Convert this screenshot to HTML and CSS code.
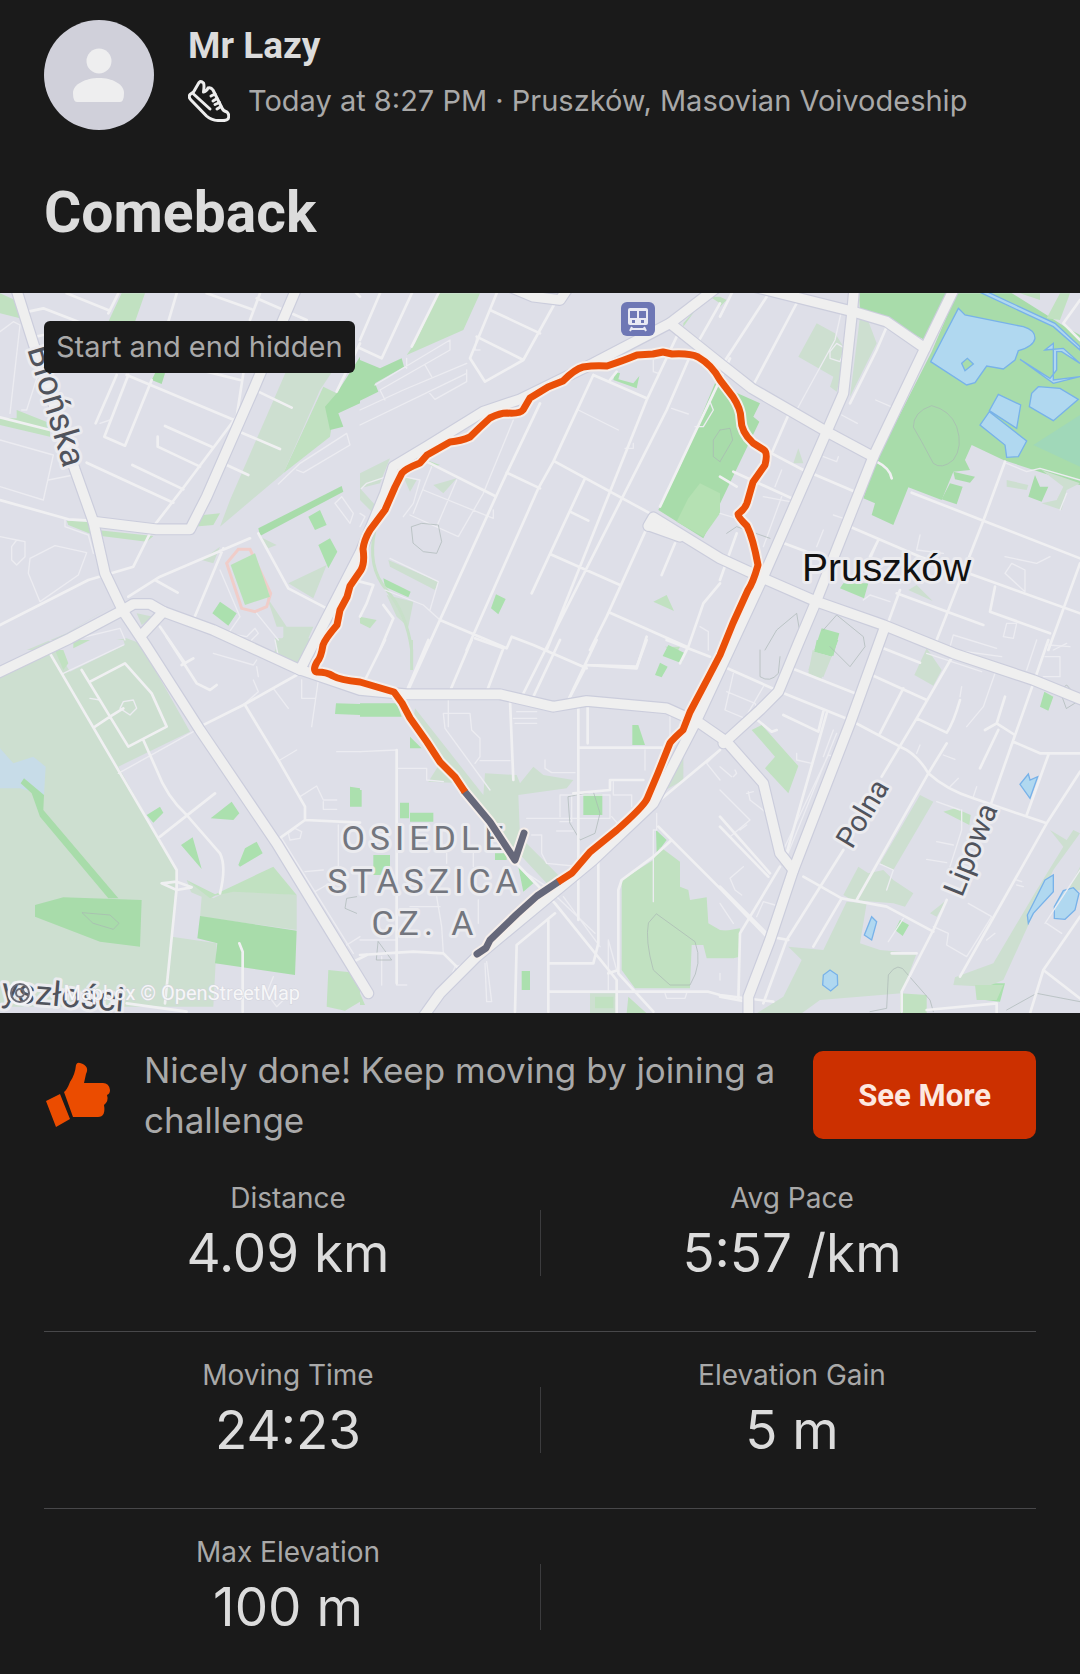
FILE: index.html
```html
<!DOCTYPE html>
<html lang="en">
<head>
    <meta charset="UTF-8">
    <meta name="viewport" content="width=device-width, initial-scale=1.0">
    <title>Comeback</title>
    <link rel="stylesheet" href="styles.css">
</head>
<body>
<header class="athlete">
    <svg class="avatar" viewBox="0 0 110 110" role="img" aria-label="Mr Lazy">
        <circle cx="55" cy="55" r="55" fill="#d0d0da"/>
        <circle cx="55" cy="41" r="12.5" fill="#eeeeef"/>
        <path d="M33 82q-4 0-4-9c0-9 13-15 26-15s25 6 25 15q0 9-4 9z" fill="#eeeeef"/>
    </svg>
    <div class="athlete-info">
        <div class="name">Mr Lazy</div>
        <div class="meta">
            <svg class="shoe" viewBox="0 0 42 42" aria-hidden="true">
                <path d="M2 14.500L5.500 12L11 2.500Q13 .5 15.500 3Q16.500 5 15.500 12Q19 11 20 8Q23 7 25 10L34 28Q35 31 39 32Q42 35 40 39Q38 41 33 40.500Q24 41 18.500 36L3 20Q0 17 2 14.500Z"/>
                <path d="M5.500 14L22 29M23 16L27 14M25 21L29 18.500M27 24.500L31.500 22.500M29 29L33 26.500"/>
            </svg>
            <span>Today at 8:27 PM · Pruszków, Masovian Voivodeship</span>
        </div>
    </div>
</header>

<h1>Comeback</h1>

<div class="map">
    <!-- The drawing is split in 3 x 2 tiles of 1080 units -->
    <svg class="map-canvas" viewBox="0 0 3240 2160" role="img" aria-label="Route map, Pruszków">
        <defs>
            <g id="major">
                <g transform="translate(0 -39)">
                    <path d="M40 0L100 190L225 570L280 725L315 880L370 995L440 1100L600 1350L830 1690L1105 2140"/>
                    <path d="M280 725L470 748H570L620 650L760 330L900 0"/>
                    <path d="M-20 1185L210 1075L370 990L400 972H450L490 995L640 1050L890 1165L1080 1230L1220 1243H1500L1660 1280L1760 1263L2000 1285L2100 1330L2180 1385L2290 1510L2340 1720L2380 1770"/>
                    <path d="M425 1065L490 995"/>
                    <path d="M900 1170L1080 820L1155 640L1180 560L1280 500L1450 395L1560 358L1780 250L2010 130L2180 0"/>
                </g>
                <g transform="translate(1080 -39)">
                    <path d="M930 130L1080 250L1175 325L1400 455L1540 530"/>
                    <path d="M865 738L880 712L1080 835L1210 895L1370 965L1570 1035L1780 1120L2020 1200L2180 1265"/>
                    <path d="M870 738L960 770"/>
                    <path d="M400 0L520 50L600 60L640 0"/>
                </g>
                <g transform="translate(2160 -39)">
                    <path d="M405 0L395 110L370 340L320 455L130 890L-70 1320L-200 1570L-380 1740L-730 2030L-840 2140L-890 2210"/>
                    <path d="M715 0L615 205L460 530L290 960L235 1090L175 1235L120 1290L10 1390"/>
                    <path d="M60 10L400 95L500 125L615 205"/>
                    <path d="M495 1040L390 1330L220 1770L150 1980L85 2150V2210"/>
                </g>
            </g>
            <path id="track" d="M465 499L455 484L440 469L427 449L410 425L402 410L394 399L377 394L360 389Q340 387 333 383Q327 379 317 379Q312 378 317 369Q321 365 323 352Q325 346 337 332L340 317L347 304L350 293L361 277Q365 270 363 256Q364 247 370 237L385 217L395 194L402 180Q405 176 420 170L427 162L450 149Q461 148 470 144Q480 134 490 125Q500 120 507 120Q520 121 523 117L530 105L548 94L563 88Q575 76 583 74Q595 72 607 73Q625 67 637 62L653 61L663 59L672 61Q690 60 698 64Q712 72 720 87L733 104Q741 116 741 126Q741 139 753 150L764 157Q768 160 765 172L753 189L747 210Q745 216 738 221Q738 224 747 233Q753 245 758 272Q753 290 748 297L733 330L720 362L708 385L690 419L683 437Q673 446 670 450L658 480L647 506Q643 514 617 537L590 559L572 580L558 589"/>
            <path id="hidden-track" d="M465 499L490 529L515 567L524 540M558 589L537 603L517 621L490 647L486 655L477 661"/>
        </defs>

        <rect width="3240" height="2160" fill="#dedfe8"/>

        <g class="areas" transform="translate(0 -39)">
            <path class="g2" d="M0 40L45 60L60 115L0 100zM365 40H435L405 125H325zM50 390L150 430V470L0 435V415H50z"/>
            <path class="g1" d="M860 270H1000L960 330L850 580L660 740L690 660z"/>
            <path class="g2" d="M970 320L1010 340L990 470L850 580z"/>
            <path class="g3" d="M1080 230L1010 340L975 380L990 450L1030 440L1015 400L1080 370zM470 270L495 280L485 312L455 300z"/>
            <path class="g3" d="M775 745L1025 618L1030 635L780 768z"/>
            <path class="g2" d="M200 722L270 725L290 750L460 768L440 785L280 765L205 735zM610 705L660 700L640 735L580 740z"/>
            <path class="g4" d="M925 710L960 690L980 735L945 750zM955 795L990 775L1012 815L985 865zM637 1000L660 965L710 1000L685 1037z"/>
            <path class="g1" d="M865 910L980 855L940 955zM605 840L660 800L640 850zM780 770L830 795L805 805zM850 1040H940L890 1155L820 1120L850 1070zM800 950L860 1040H830z"/>
            <path class="g1" d="M120 1110L340 975L200 1060L80 1110zM410 1000L460 1010L425 1035z"/>
            <path d="M715 808H750L812 940L800 980L765 995L725 985L680 850z" fill="none" stroke="#f0cdc9" stroke-width="9"/>
            <path d="M692 855L765 820L810 950L735 975z" fill="#b8e2b8"/>
        </g>
        <g class="areas" transform="translate(1080 -39)">
            <path class="g2" d="M235 40H360L310 150L140 225L165 190z"/>
            <path class="g3" d="M0 240L60 265L125 235L132 260L45 310L55 335L0 362z"/>
            <path class="g1" d="M0 580L90 535L60 610L0 625zM0 625L50 680L40 700L0 660z"/>
            <path class="g4" d="M765 275L780 280L775 298L820 310L838 288L830 325L760 300zM393 985L408 943L437 957L415 1003zM70 895L152 935L145 952L75 920z"/>
            <path class="g1" d="M85 840L235 905L225 930L90 860zM80 945L160 965L145 1040L110 1010zM220 615L290 595L250 640zM130 590L170 600L150 635z"/>
            <path class="g2" d="M0 1010L50 1020L30 1045L0 1030zM880 965L920 945L942 993zM970 130L1010 85L970 140zM1050 50H1080V70zM915 1100H960L950 1120zM200 540L240 555L215 560z"/>
            <path class="g3" d="M1065 310L1200 370L1180 410L1198 425L1030 775L895 690L960 560z"/>
            <path class="g5" d="M985 655L1020 610L1080 640V700L1030 770L950 725z"/>
            <path d="M45 750Q20 860 80 930T155 1110V1170" fill="none" stroke="#c8e0c9" stroke-width="9"/>
        </g>
        <g class="areas" transform="translate(2160 -39)">
            <path class="g2" d="M415 40H680L615 180L500 120L420 90z"/>
            <path class="g3" d="M710 40H1080V615L850 540L755 495L735 540L750 570L700 575L665 660L565 622L520 735L455 705L465 670L430 655L460 560L635 215zM420 40H680L615 180L500 120L420 90z"/>
            <path class="t" d="M940 495L1080 405V560z"/>
            <path class="base" d="M860 30H1080V165L1035 140L980 105z"/>
            <path class="g2" d="M1020 40H1050L1020 120L980 115zM900 40H960V60zM0 50L20 60L0 80z"/>
            <path class="g3" d="M700 575L765 590L750 608L705 598zM690 610L728 620L710 673L665 658zM945 585L960 620L985 620L965 665L925 650z"/>
            <path class="g1" d="M290 130L345 160L380 215L350 335L330 320L340 290L235 230zM420 110H440L470 190L390 350zM860 600L925 615L920 630L860 620zM965 570L1080 610L1040 630L1025 690L965 670L1010 660L1030 620z"/>
            <path class="g4" d="M370 910H445L432 955L360 925zM305 1045L358 1060L340 1128L283 1110z"/>
            <path class="g1" d="M565 930L590 915L638 963zM220 550L235 505L250 550zM278 1110L310 1120L305 1200L265 1180z"/>
            <path class="w" d="M715 85L735 105L910 140Q945 150 945 175Q940 200 895 212L885 240L850 267L800 258L765 308L740 315L632 245zM725 250L742 235L760 252L735 272z"/>
            <path class="w" d="M835 343L902 375L890 445L808 392zM808 395L920 483L895 530L860 532L855 495L780 435zM955 320L1020 325L1075 358L1000 422L928 380L935 340z"/>
            <path class="w" d="M765 30L1000 140L1080 210L1080 200L1005 130L790 30zM975 210L1030 205L1080 250L1025 215H1010V270L990 295L900 238L1000 310L1080 290L1000 300L1000 190z"/>
        </g>
        <g class="areas" transform="translate(0 1041)">
            <path class="g1" d="M0 100L150 40L230 20L380 -5L420 10L570 275L355 380L530 690L525 750L515 890L650 910L640 1100H0z"/>
            <path class="g1" d="M560 720L640 775L690 750L890 765L890 870L600 830zM825 -5H940L900 80L830 60z"/>
            <path class="base" d="M545 745L605 770L595 895L520 890zM145 0H370L375 15L210 95L165 20z"/>
            <path class="g2" d="M630 770L820 680L890 765L700 755zM560 720L650 765L630 775zM985 990L1080 1000V1085L1035 1112L980 1100zM165 30H190L205 70L190 90zM220 0H270L220 25z"/>
            <path class="lake" d="M0 325L40 370L100 350L137 380L132 465L60 445H0z"/>
            <path class="g3" d="M105 795L190 772L425 780L420 920L300 905L105 830z"/>
            <path class="g3" d="M62 430L72 415L132 465L130 510L355 775H325L120 530L95 460z"/>
            <path class="g3" d="M600 828L890 872L885 1005L645 970L652 910L592 895z"/>
            <path class="g4" d="M440 525L480 500L490 518L460 548zM632 535L695 485L718 520L700 540zM543 615L578 592L605 687zM715 675L735 625L770 605L788 640L720 680zM1008 190L1080 192V225L1005 222zM1050 440L1080 445V500H1050z"/>
        </g>
        <g class="areas" transform="translate(1080 1041)">
            <path class="g4" d="M0 190H110L125 230H0zM150 290L185 325H150zM0 450H5V500H0zM120 488H147V535H120zM150 518H220V545H150zM40 645H90V705H40zM405 640H440V660H405zM475 680L520 730L490 755zM485 993H510V1050H485zM817 255H835L855 315H817zM670 462H727V525H670zM925 15L975 40L965 70L908 48zM900 68L923 80L905 112L885 105zM888 570L920 600L890 640z"/>
            <path class="g1" d="M165 205L370 465L375 400L470 405L480 430L520 380L550 405L640 420L620 445L475 465L480 590L600 710L560 730L430 590L310 430L205 425L240 370L160 240zM900 460L970 350V420zM690 1060H770V1120H690z"/>
            <path class="g2" d="M900 620L960 665V740L985 750L990 780L1040 772L1045 850L1080 870L1140 875V950L1120 955H1040L1030 915H995L990 1045L825 1045L785 990V720L880 660zM805 1070L860 1120H800zM0 1060L15 1095H0zM705 1070H760V1105H705z"/>
            <path d="M155 0V70" fill="none" stroke="#c8e0c9" stroke-width="8"/>
        </g>
        <g class="areas" transform="translate(2160 1041)">
            <path class="g4" d="M290 0H355L335 50L283 35zM973 155L1000 170L985 212L960 200zM540 840L567 855L548 888L525 870zM800 1030H855L840 1085L795 1080z"/>
            <path class="g1" d="M283 35L335 50L310 112L265 90zM620 25L665 90L640 137L583 105zM600 465L640 485L520 690L480 670zM415 680L445 700L490 690L520 720L580 760L555 800L520 790L395 780L370 765zM380 785L440 790L420 910L480 930L590 940L545 1060L300 1080L245 1120H110L190 1070L245 960L205 920L310 930zM990 570L1040 600L1060 570L1080 580L1000 690L850 1020L800 1040L700 1035L705 1012L820 970L950 750L1030 620zM1080 680L1040 760L1080 750zM630 820L680 780L650 830z"/>
            <path class="g2" d="M95 270L125 255L235 378L205 460L135 385L165 350zM670 515L705 505L752 525L748 555zM540 1060L620 1065V1120H540zM765 1035H850L830 1080H770zM0 875L60 865L50 950H0z"/>
            <path class="w" d="M455 830L470 845L455 900L433 885zM330 990L352 1005L353 1035L332 1053L308 1035L310 1005zM925 402L930 420L953 410L930 475L900 433zM975 720L1000 705V755L940 820L925 850L922 825L945 780zM1060 743L1077 760L1065 810L1035 838L1003 835V800L1030 752z"/>
        </g>

        <g class="paths">
            <path transform="translate(0 -39)" d="M0 155L40 125L60 135L30 400M0 480L160 525L130 660L0 620M0 770L50 780L35 800V840L50 855L75 830V785L50 780M90 835L165 797L260 818L235 885L120 965L85 880zM145 600L220 585M195 720V740L265 765L280 820M835 612L900 550L1040 460L1050 495L910 578L890 570M1005 670L1025 650L1060 700L1050 730zM660 870L720 1010L685 1060L740 1070L765 1045L775 1060L755 1080M770 1000L835 1080M65 390H80L115 280M215 1080L360 1045L375 1080M300 430L330 420"/>
            <path transform="translate(1080 -39)" d="M0 390L130 330L320 250M0 435L320 280M45 315L270 180V210L60 330L75 360M140 235V265M195 255L215 290M205 335L225 358L320 305V270M460 420L370 640L295 770L150 705M215 560L160 700M190 630L400 715V690M290 600L230 740M130 590L180 600L160 670L130 710M90 835L235 905L210 990M75 930L190 975L240 1020M655 390L775 450M820 490V505H795M935 385L985 402M1050 365L1060 390L1030 440H1005M350 170L345 210H360M5 625L20 610L80 590M0 700L15 710L0 740M880 240V275L895 280M1020 1040L1045 1055V1110"/>
            <path transform="translate(2160 -39)" d="M365 90L345 180L230 390M330 215L350 190L375 205L360 245L330 235zM467 360L518 382M365 405L412 430M310 530L350 545L355 530M0 700L50 715M130 650L210 665M185 570L165 620M185 650L130 800M340 705L370 715M310 750L290 800M475 780L455 830M600 765L590 810L670 820M855 830L950 850L990 830M875 850L855 880L915 935V870L875 850M850 1070L860 1030H890L880 1075L850 1070M690 1100L700 1065L830 1105M860 550L920 575L960 565L1080 600M1040 640L1020 690M430 960L450 945L510 965M640 1100L600 1080M1000 1110L1040 1090"/>
            <path transform="translate(0 1041)" d="M190 100L370 15M355 400L580 275M640 40L760 75L770 60M825 0L835 50M905 120V175H945M955 120L935 260M1010 335H1080M760 120L775 155L730 195M820 145L865 205M900 470L950 438L970 480H1010M970 485V508H1010M770 80L775 110M840 360L890 330M865 580L870 600L900 595L905 575L885 565zM845 595L1060 940M915 695L970 690M945 755L980 735M1015 555V680M820 1010L800 1060L830 1100L850 1080M1040 915L1080 890M270 175L300 180M370 185L400 180L410 205L390 225L360 205z"/>
            <path transform="translate(1080 1041)" d="M265 180V260M250 220H330L335 270L360 295V350L345 370M250 220L255 265L390 450M360 362H450M470 215H530M460 235H530M465 250H530M555 360V385L575 398H645M0 335L110 330M110 385H200V420L250 425M500 535H750V465L600 465V530M600 545H635V465M760 425V465H815V500M590 573H640M755 530L790 570M930 220V310M855 330V390M890 520V570H880V785M515 585H545V640L560 670L640 678M705 880L590 770M610 770L720 920M500 700L560 740M380 965L395 1085H380L375 970M0 900H110V1035H140M250 940L245 860L230 770M275 1005L285 980L360 960M65 950V1035M355 780V850M340 640V680M260 640V670M150 800H240M915 1060L920 1075H975L980 1060M1040 370L1080 330M1040 370L1080 420M745 900V1050M745 900L770 990"/>
            <path transform="translate(2160 1041)" d="M40 100L15 210L75 235L130 140M20 155L105 190L120 230M350 280L200 650M340 270L310 350M345 350L325 345L190 630M230 340V360L275 370M35 410L0 380M40 410L50 400L45 390M85 455L90 480L135 515M80 460L100 455M30 590L90 540L0 450M60 570L80 555M70 680L30 715L45 750L65 765M110 830L130 785L165 795M825 100L790 200L740 260M620 40L785 95M700 30L845 50M950 0L920 90M985 15L1050 20M975 50H1020V110H970M725 140L720 170M600 315L590 340M670 345L705 358M715 415L690 440M650 605L700 615M620 658L680 668M650 485L720 510M770 440L760 470M480 672L520 690L500 750M640 860L685 880L680 915L740 950L815 830L745 790M550 835L505 905M890 735L910 740M800 900L825 880M890 720L905 725M980 850L1025 880M1080 690L975 850M725 510V570L690 680M0 790L40 850M0 1020V1000"/>
        </g>
        <g class="hollows">
            <path transform="translate(1080 -39)" d="M155 740L185 730L235 735L245 785L230 820L190 815L160 790zM1080 450L1060 480V530L1080 545"/>
            <path transform="translate(2160 -39)" d="M580 440Q580 395 635 377Q690 390 710 440Q730 500 700 540Q665 570 640 550L605 485zM0 450L30 445L38 480L0 545M20 760L50 740L150 775M135 1110L170 1050L230 1000L240 1060M310 1050L350 1005L430 1070L435 1100L390 1160L330 1100"/>
            <path transform="translate(0 1041)" d="M247 818L330 825L357 850L340 868L280 850zM1070 770L1040 775L1035 805L1070 820"/>
            <path transform="translate(1080 1041)" d="M890 822L1005 905Q1030 970 990 1035H930L880 990Q855 900 865 850zM625 470L700 455L720 520L705 580L660 600L630 550zM55 905L95 960H50z"/>
            <path transform="translate(2160 1041)" d="M450 1115L500 1105L505 1005Q535 960 560 1000L630 1080L640 1115M860 1110L950 1060L1080 1085M1020 150L1040 135L1080 180L1040 205zM120 30V110Q150 130 175 100L180 50"/>
        </g>

        <g class="minor">
            <path transform="translate(0 -39)" d="M85 95L130 85L260 135M200 40L330 92M325 100L355 40M530 40L505 125M620 40L755 88M780 40L750 120M770 55L920 120M1030 0L1080 50M1080 190L1010 335M350 285L287 430M385 285L313 470L375 497L455 300M380 285L715 425M620 275L720 300M730 280L710 410L635 510L545 630L460 740L400 860L265 900L0 1035M495 438L635 500M473 470V500L600 560M397 555L550 628M260 548L520 668M775 335L875 383M725 458L840 507M680 555L745 585M0 412L150 450M0 660L205 718L270 722M385 950L480 890L750 775M670 805L580 1020M465 900L533 938M775 760L865 925L980 985M85 175L130 165M480 1040L555 1150"/>
            <path transform="translate(1080 -39)" d="M60 40L0 180M160 30L65 235L0 205M240 30L155 200M410 40L330 235L375 305L490 240L590 60M390 90L540 160M350 170L490 240M950 170L860 360L560 1110M985 240L920 390L480 1260M1110 235L900 680M700 285L580 545L535 625L320 1110M540 370L440 580L410 645L190 1130L140 1240M700 285L860 355M750 300L770 275M200 545L405 648M440 578L540 625M585 545L870 700M675 595L515 940M630 695L685 722M570 822L780 915M860 745L740 1010L690 1110M945 790L905 885M750 998L980 1100M240 1020L440 1105L455 1070L520 1095L680 1165M0 905L40 915L20 970L0 1010M70 975L100 1015L60 1110M1080 70L1015 185M1080 910L1030 970L985 1100L960 1150M860 1070L830 1165L680 1155L620 1270"/>
            <path transform="translate(2160 -39)" d="M40 30L0 110M140 50L10 250M235 60L100 315M500 140L470 210L390 370M205 405L155 520L250 570M40 575L215 655M280 582L405 635M470 545Q510 565 515 595M575 638L790 722L1080 835M855 545L790 722L650 1080M385 738L600 830M475 780L450 830M600 830L760 885M540 930L500 1040M530 940L790 1035M760 885L1080 1000M825 920L810 995L990 1060M1080 850L985 1110M1080 60L1030 130L1080 180M180 785L260 815M0 900L50 760M0 590L50 620"/>
            <path transform="translate(0 1041)" d="M150 40L530 690V745L495 1090M245 90L330 230L385 320L500 260L455 160L375 70L270 125M330 230L285 260M330 230L370 205M430 300L470 390Q500 470 560 525L660 640Q680 680 660 760M480 590L645 460M500 -10L590 130L630 150L650 135M545 75L580 55M600 260L730 195L890 105M735 195L835 360L915 500V540L825 605M915 540L1080 548M718 910L728 935V1115M1050 970L1100 945M380 1090L560 1115M485 730L530 725L575 742L530 750z"/>
            <path transform="translate(1080 1041)" d="M75 0L15 120M205 0L135 165M335 0L265 165M430 25L380 155M600 0L520 170M710 0L620 190M655 185V840M683 190V310M655 323H905M450 180L460 420M345 -5L430 25M110 330V1030M715 660V910L700 970H570M565 840V1115M585 790L770 1020V1120M585 820L470 915L465 1115M585 790L440 640M565 1055H1045L1080 1065L1240 1085M900 480L1080 330M895 560L1080 745L1220 890M935 600L880 650L785 720L775 750V1000L880 1115M640 460L750 450V420H850M0 945L160 935L250 940L300 990M745 1000L775 990M860 0L830 80L680 75M920 0L1050 50"/>
            <path transform="translate(2160 1041)" d="M0 75L180 155L390 240L540 320Q590 340 625 400Q680 450 760 475L980 550M215 85L405 160M455 105L620 180M490 25L600 68M550 145L480 280M700 45L590 235L485 410M590 235L680 278Q700 250 720 180M370 630L200 900L130 1090M680 310L625 400L410 780M320 220L200 640M310 215L295 275L190 225M985 0L940 130L880 300L810 500M855 170L830 250L880 282M830 250L795 270M835 270L780 385M880 305L960 340H1080M985 345L920 525M1080 395L980 550L720 1010M680 780L640 870L545 1055V1115M250 710L365 775L500 800L640 875M365 775L280 920M515 940H590M1080 830L970 990L930 1120M970 990L1080 1075M0 740L150 890L205 900M180 680L60 880L55 1080M0 1070L80 1085M620 1110L830 1090V1120M100 230L155 275L170 270M0 560L145 710M150 700L0 530"/>
        </g>

        <use href="#major" class="major-casing"/>
        <use href="#major" class="major-road"/>

        <g transform="scale(3)">
            <g class="station" transform="translate(621 9)">
                <rect width="34" height="34" rx="6" fill="#6e77b5"/>
                <rect x="7" y="6" width="20" height="17" rx="2" fill="#e9eaf4"/>
                <path d="M9 9h7v7H9zM18 9h7v7h-7zM11 18h3v3h-3zM20 18h3v3h-3z" fill="#6e77b5"/>
                <path d="M11 25L9 29M23 25L25 29M10 27H24" fill="none" stroke="#e9eaf4" stroke-width="2"/>
            </g>

            <g class="labels">
                <text transform="translate(27 56) rotate(73)" font-size="35">Błońska</text>
                <text transform="translate(852 557) rotate(-59)" font-size="29">Polna</text>
                <text transform="translate(962 605) rotate(-68)" font-size="30">Lipowa</text>
                <text transform="translate(1 708) rotate(5)" font-size="34">yszłości</text>
                <g class="district">
                    <text x="425" y="557">OSIEDLE</text>
                    <text x="425" y="600">STASZICA</text>
                    <text x="425" y="642">CZ. A</text>
                </g>
                <text class="city" x="802" y="288">Pruszków</text>
            </g>

            <g class="route">
                <use href="#track" class="halo"/>
                <use href="#hidden-track" class="halo"/>
                <use href="#hidden-track" class="hidden-line"/>
                <use href="#track" class="line"/>
            </g>

            <g fill="none" stroke="#6a6b76" stroke-width="2">
                <circle cx="20" cy="700" r="11" stroke="#f3f3f6" stroke-width="3"/>
                <circle cx="20" cy="700" r="9"/>
                <circle cx="20" cy="700" r="4"/>
            </g>
            <text class="attribution" x="300" y="707">Mapbox © OpenStreetMap</text>
        </g>
    </svg>
    <div class="privacy">Start and end hidden</div>
</div>

<main>
    <section class="promo">
        <svg class="thumb" viewBox="0 0 64 66" aria-hidden="true">
            <path d="M0 39L14 32L24 57L10 65zM18 30Q21 28 24 20Q29 13 30 3Q31 0 34 1Q44 4 40 12L38 21H57Q63 21 64 28Q64 32 61 33Q63 39 58 43Q60 55 52 55H27z" fill="#eb4c00"/>
        </svg>
        <p>Nicely done! Keep moving by joining a challenge</p>
        <button type="button">See More</button>
    </section>

    <section class="stats">
        <div class="row">
            <div class="stat">
                <span class="label">Distance</span>
                <span class="value">4.09 km</span>
            </div>
            <div class="stat">
                <span class="label">Avg Pace</span>
                <span class="value">5:57 /km</span>
            </div>
        </div>
        <div class="row">
            <div class="stat">
                <span class="label">Moving Time</span>
                <span class="value">24:23</span>
            </div>
            <div class="stat">
                <span class="label">Elevation Gain</span>
                <span class="value">5 m</span>
            </div>
        </div>
        <div class="row">
            <div class="stat">
                <span class="label">Max Elevation</span>
                <span class="value">100 m</span>
            </div>
            <div class="stat"></div>
        </div>
    </section>
</main>
</body>
</html>
```
FILE: styles.css
```css
* {
    box-sizing: border-box;
}

body {
    background-color: #1a1a1a;
    color: #dcdcdc;
    font-family: Inter, Roboto, "Liberation Sans", sans-serif;
    margin: 0;
}

.athlete {
    display: flex;
    gap: 34px;
    padding: 20px 44px 0;
}

.avatar {
    width: 110px;
    height: 110px;
    flex-shrink: 0;
}

.athlete-info {
    padding-top: 2px;
}

.name {
    font-family: Roboto, sans-serif;
    font-size: 37px;
    font-weight: 700;
    line-height: 48px;
}

.meta {
    display: flex;
    align-items: center;
    gap: 18px;
    margin-top: 10px;
    color: #a9a9a9;
    font-size: 29px;
    line-height: 42px;
}

.shoe {
    width: 42px;
    height: 42px;
    flex-shrink: 0;
    fill: none;
    stroke: #ededed;
    stroke-width: 3;
    stroke-linecap: round;
    stroke-linejoin: round;
}

h1 {
    font-family: Roboto, sans-serif;
    font-size: 57px;
    font-weight: 700;
    line-height: 72px;
    margin: 47px 44px 44px;
}

/* Map */
.map {
    position: relative;
}

.map-canvas {
    display: block;
    width: 100%;
}

.privacy {
    position: absolute;
    top: 28px;
    left: 44px;
    padding: 5px 12px;
    border-radius: 6px;
    background-color: #1a1a1a;
    color: #a9a9a9;
    font-size: 29px;
    line-height: 42px;
}

.g1 { fill: #cddfd0; }
.g2 { fill: #c1e1c1; }
.g3 { fill: #a8dcaa; }
.g4 { fill: #abe0ae; }
.g5 { fill: #b5e1b3; }
.t { fill: #a0d8b9; }
.base { fill: #dedfe8; }
.lake { fill: #c7dce8; }

.w {
    fill: #b0d8f0;
    fill-rule: evenodd;
    stroke: #78b2e9;
    stroke-width: 4;
}

.paths, .minor, .hollows, .major-casing, .major-road {
    fill: none;
    stroke-linejoin: round;
    stroke-linecap: round;
}

.paths {
    stroke: #ececf1;
    stroke-width: 4;
}

.hollows {
    stroke: #a9b5b4;
    stroke-width: 2;
}

.minor {
    stroke: #f0f0f2;
    stroke-width: 8;
}

.major-casing {
    stroke: #cbcddc;
    stroke-width: 36;
}

.major-road {
    stroke: #efefef;
    stroke-width: 29;
}

.labels {
    font-family: Roboto, sans-serif;
    fill: #50535c;
    stroke: #ebebef;
    stroke-width: 6;
    stroke-linejoin: round;
    paint-order: stroke;
}

.district {
    fill: #73767e;
    font-size: 34px;
    letter-spacing: 5px;
    text-anchor: middle;
}

.city {
    font-family: "Liberation Sans", sans-serif;
    font-size: 39px;
    fill: #111;
}

.route {
    fill: none;
    stroke-width: 7;
    stroke-linejoin: round;
}

.halo {
    stroke: #f5eeea;
    stroke-width: 11;
    stroke-linecap: round;
}

.line {
    stroke: #ea4f08;
}

.hidden-line {
    stroke: #66687a;
    stroke-linecap: round;
}

.attribution {
    font-family: Roboto, sans-serif;
    font-size: 20px;
    text-anchor: end;
    fill: #f6f6f8;
    stroke: #d3d4dc;
    stroke-width: 1;
    paint-order: stroke;
}

/* Summary */
main {
    padding: 32px 44px 0;
}

.promo {
    display: flex;
    align-items: center;
}

.thumb {
    width: 64px;
    height: 66px;
    margin: 0 34px 0 2px;
    flex-shrink: 0;
}

.promo p {
    flex: 1;
    margin: 0;
    color: #a9a9a9;
    font-size: 35px;
    line-height: 50px;
}

button {
    flex-shrink: 0;
    height: 88px;
    padding: 0 45px;
    border: none;
    border-radius: 10px;
    background-color: #cc3000;
    color: #fde8e0;
    font-family: Roboto, sans-serif;
    font-size: 31px;
    font-weight: 700;
    cursor: pointer;
}

.stats {
    margin-top: 10px;
}

.row {
    display: grid;
    grid-template-columns: 1fr 1fr;
    gap: 16px;
    height: 177px;
    padding-top: 23px;
    position: relative;
    border-bottom: 1px solid #48484a;
}

.row:last-child {
    border-bottom: none;
}

/* short rule between the two columns */
.row::after {
    content: "";
    position: absolute;
    left: 50%;
    top: 55px;
    width: 1px;
    height: 66px;
    background-color: #3c3c3e;
}

.stat {
    display: flex;
    flex-direction: column;
    align-items: center;
}

.label {
    color: #a9a9a9;
    font-size: 28px;
    line-height: 40px;
}

.value {
    font-size: 53px;
    line-height: 71px;
}
```
